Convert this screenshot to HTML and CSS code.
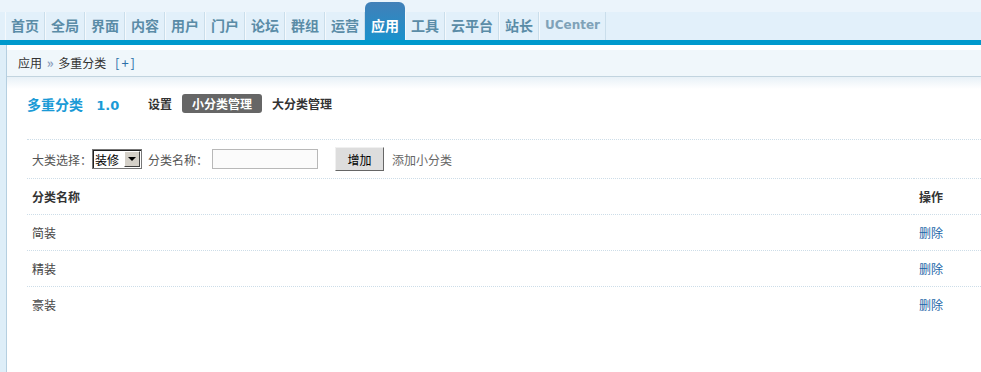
FILE: index.html
```html
<!DOCTYPE html>
<html lang="zh-CN">
<head>
  <meta charset="UTF-8">
  <title>多重分类 - 管理中心</title>
  <link rel="stylesheet" href="styles.css">
</head>
<body>

  <div class="header">
    <ul class="nav">
      <li><a href="#">首页</a></li>
      <li><a href="#">全局</a></li>
      <li><a href="#">界面</a></li>
      <li><a href="#">内容</a></li>
      <li><a href="#">用户</a></li>
      <li><a href="#">门户</a></li>
      <li><a href="#">论坛</a></li>
      <li><a href="#">群组</a></li>
      <li><a href="#">运营</a></li>
      <li class="active"><a href="#">应用</a></li>
      <li><a href="#">工具</a></li>
      <li><a href="#">云平台</a></li>
      <li><a href="#">站长</a></li>
      <li class="uc"><a href="#">UCenter</a></li>
    </ul>
  </div>

  <div class="wrap">
    <div class="side"></div>
    <div class="main">
      <div class="crumb">
        应用 <span class="raquo">&raquo;</span> 多重分类 <a href="#" class="add">[+]</a>
      </div>

      <div class="content">
        <div class="titlebar">
          <h3>多重分类 <span class="ver">1.0</span></h3>
          <ul class="tabs">
            <li><a href="#">设置</a></li>
            <li class="cur"><a href="#">小分类管理</a></li>
            <li><a href="#">大分类管理</a></li>
          </ul>
        </div>

        <form class="addform">
          <label>大类选择：</label>
          <span class="select">
            <select>
              <option>装修</option>
            </select>
            <span class="arrow"></span>
          </span>
          <label class="name-label">分类名称：</label>
          <input type="text" class="txt">
          <button type="button" class="btn">增加</button>
          <span class="tip">添加小分类</span>
        </form>

        <table class="list">
          <tr class="head">
            <th>分类名称</th>
            <th class="op">操作</th>
          </tr>
          <tr>
            <td>简装</td>
            <td class="op"><a href="#">删除</a></td>
          </tr>
          <tr>
            <td>精装</td>
            <td class="op"><a href="#">删除</a></td>
          </tr>
          <tr>
            <td>豪装</td>
            <td class="op"><a href="#">删除</a></td>
          </tr>
        </table>
      </div>
    </div>
  </div>

</body>
</html>
```

FILE: styles.css
```css
body {
  margin: 0;
  font: 12px "Noto Sans CJK SC", "Liberation Sans", sans-serif;
  color: #333;
  background: #fff;
}

a {
  text-decoration: none;
}

/* top navigation */
.header {
  height: 40px;
  background: linear-gradient(#ebf4fb 12px, #e2f0fa 12px);
  border-bottom: 5px solid #0099cc;
}

.nav {
  display: flex;
  align-items: flex-end;
  height: 40px;
  margin: 0;
  padding: 0 0 0 5px;
  list-style: none;
}

.nav li a {
  display: block;
  height: 28px;
  line-height: 26px;
  padding: 0 5px;
  border-left: 1px solid #f4f9fd;
  border-right: 1px solid #cadeeb;
  font-size: 14px;
  font-weight: bold;
  color: #5a8ca7;
}

.nav li.active a {
  height: 28px;
  padding-top: 10px;
  border-color: transparent;
  border-radius: 6px 6px 0 0;
  background: linear-gradient(#4280b8, #1a91cc);
  color: #fff;
}

.nav li.uc a {
  font-family: "DejaVu Sans", sans-serif;
  font-size: 12px;
  color: #7fa2b8;
}

/* body */
.wrap {
  display: flex;
  min-height: calc(100vh - 45px);
}

.side {
  width: 6px;
  background: #deeef8;
  border-right: 1px solid #b5cfe0;
}

.main {
  flex: 1;
  min-width: 0;
}

.crumb {
  height: 26px;
  line-height: 26px;
  padding-left: 11px;
  border-top: 5px solid #fff;
  border-bottom: 1px solid #c2d4df;
  background: #f0f7fb;
  color: #333;
}

.crumb .raquo {
  color: #8d9fbd;
  font-size: 13px;
  font-weight: bold;
  margin: 0 2px;
}

.crumb .add {
  color: #2b6fa8;
  font-size: 13px;
  letter-spacing: 2px;
  margin-left: 6px;
}

.content {
  padding: 17px 0 0 20px;
  background: linear-gradient(#e8f1f7, #fff 12px) no-repeat;
}

.titlebar {
  display: flex;
  align-items: center;
  height: 19px;
}

.titlebar h3 {
  width: 111px;
  margin: 0;
  font-size: 14px;
  font-weight: bold;
  color: #1a9ad6;
}

.titlebar .ver {
  font-family: "DejaVu Sans", sans-serif;
  font-size: 13px;
  margin-left: 10px;
}

.tabs {
  display: flex;
  margin: 0;
  padding: 0;
  list-style: none;
}

.tabs li a {
  display: block;
  padding: 0 10px;
  line-height: 19px;
  border-radius: 3px;
  font-weight: bold;
  color: #333;
}

.tabs li.cur a {
  background: #666;
  color: #fff;
}

/* add form */
.addform {
  display: flex;
  align-items: center;
  height: 38px;
  margin: 26px 0 0;
  padding: 0 5px;
  border-top: 1px dotted #cddde8;
  color: #555;
}

.select {
  display: inline-flex;
  align-items: center;
  height: 20px;
  box-sizing: border-box;
  border: 1px solid #777;
  box-shadow: inset 1px 1px #222;
  background: #fff;
}

.select select {
  appearance: none;
  -webkit-appearance: none;
  width: 31px;
  height: 18px;
  padding: 0 0 0 2px;
  border: none;
  background: transparent;
  font: 12px "Noto Sans CJK SC", sans-serif;
  color: #000;
}

.select .arrow {
  display: flex;
  align-items: center;
  justify-content: center;
  width: 14px;
  height: 14px;
  margin-right: 1px;
  background: #d4d0c8;
  border: 1px solid;
  border-color: #fff #404040 #404040 #fff;
}

.select .arrow::before {
  content: "";
  border-style: solid;
  border-width: 4px 4px 0;
  border-color: #000 transparent transparent;
}

.name-label {
  margin-left: 6px;
}

.txt {
  width: 106px;
  height: 20px;
  box-sizing: border-box;
  margin-left: 4px;
  padding: 0 3px;
  border: 1px solid #b8b8b8;
  background: #fbfbfb;
}

.btn {
  width: 49px;
  height: 24px;
  margin-left: 17px;
  padding: 0;
  border: 1px solid;
  border-color: #f0f0f0 #666 #666 #f0f0f0;
  background: #ddd;
  font: 12px "Noto Sans CJK SC", sans-serif;
  color: #000;
}

.tip {
  margin-left: 8px;
  color: #666;
}

/* list table */
.list {
  width: 100%;
  border-collapse: collapse;
}

.list th,
.list td {
  height: 35px;
  padding: 0 5px;
  border-top: 1px dotted #cddde8;
  text-align: left;
  color: #444;
}

.list th {
  font-weight: bold;
  color: #333;
}

.list .op {
  width: 57px;
}

.list .op a {
  color: #2366a8;
}
```
